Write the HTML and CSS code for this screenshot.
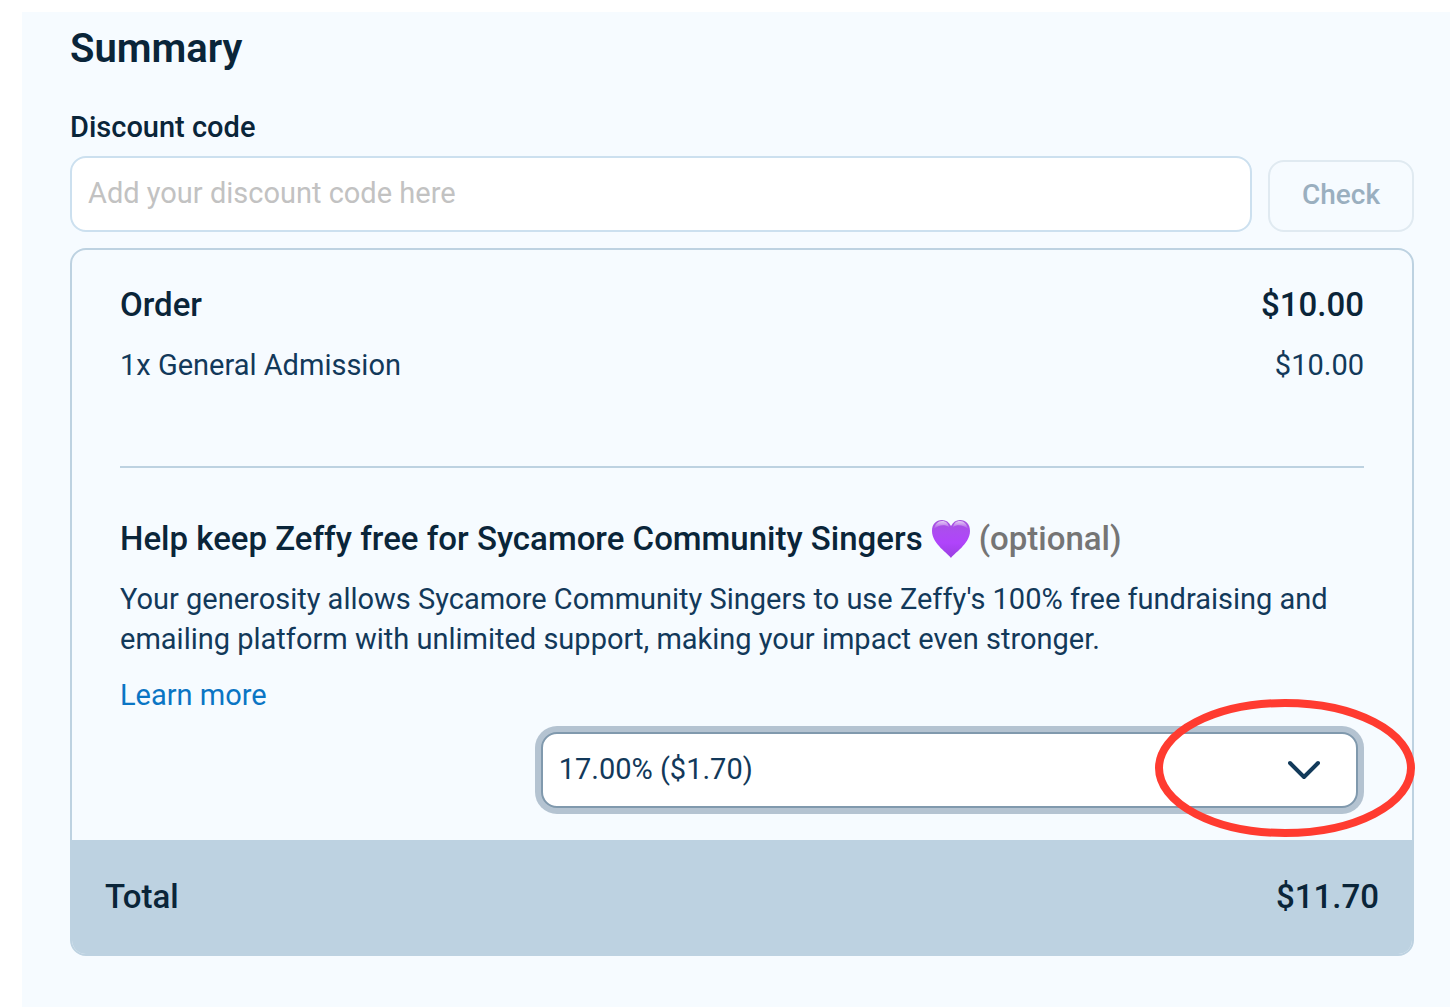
FILE: index.html
```html
<!DOCTYPE html>
<html lang="en">
<head>
<meta charset="utf-8">
<meta name="viewport" content="width=device-width, initial-scale=1">
<title>Summary</title>
<link rel="stylesheet" href="styles.css">
</head>
<body>
<main class="panel">
  <h1 class="title">Summary</h1>

  <form class="discount">
    <label class="discount-label" for="discount-code">Discount code</label>
    <div class="discount-row">
      <input class="discount-input" id="discount-code" type="text" placeholder="Add your discount code here">
      <button class="check-button" type="button" disabled>Check</button>
    </div>
  </form>

  <section class="card">
    <div class="card-body">
      <div class="line line-strong">
        <h2 class="heading">Order</h2>
        <span>$10.00</span>
      </div>
      <div class="line line-item">
        <span>1x General Admission</span>
        <span>$10.00</span>
      </div>
      <hr class="divider">
      <h2 class="heading tip-heading">
        <label for="tip">Help keep Zeffy free for Sycamore Community Singers</label>
        <svg class="heart" viewBox="0 0 40 40" role="img" aria-label="purple heart">
          <defs>
            <linearGradient id="heart-fill" x1="0" y1="0" x2="0" y2="1">
              <stop offset="0" stop-color="#a553dc"/>
              <stop offset="0.3" stop-color="#ac4cf0"/>
              <stop offset="0.6" stop-color="#b044fb"/>
              <stop offset="1" stop-color="#9a3fe0"/>
            </linearGradient>
            <linearGradient id="heart-shine" x1="0" y1="0" x2="0" y2="1">
              <stop offset="0" stop-color="#fff" stop-opacity="0.7"/>
              <stop offset="1" stop-color="#fff" stop-opacity="0"/>
            </linearGradient>
          </defs>
          <path fill="url(#heart-fill)" d="M20 39C18 35 1 25 1 12C1 5 5 1 11 1C15 1 18 3 20 7C22 3 25 1 29 1C35 1 39 5 39 12C39 25 22 35 20 39Z"/>
          <path fill="url(#heart-shine)" d="M3 10C4 5 7 2 11 2C15 2 17 4 18 8C14 5 7 6 3 10Z"/>
          <path fill="url(#heart-shine)" d="M37 10C36 5 33 2 29 2C25 2 23 4 22 8C26 5 33 6 37 10Z"/>
        </svg>
        <span class="optional">(optional)</span>
      </h2>
      <p class="tip-text">Your generosity allows Sycamore Community Singers to use Zeffy's 100% free fundraising and emailing platform with unlimited support, making your impact even stronger.</p>
      <a class="learn-more" href="#">Learn more</a>
      <div class="tip-field">
        <select class="tip-select" id="tip">
          <option>17.00% ($1.70)</option>
        </select>
        <svg class="chevron" viewBox="0 0 32 20" aria-hidden="true">
          <path d="M2 3L16 17L30 3" fill="none" stroke="#123a5a" stroke-width="4" stroke-linecap="round" stroke-linejoin="round"/>
        </svg>
        <svg class="highlight" viewBox="0 0 260 140" aria-hidden="true">
          <ellipse cx="130" cy="70" rx="126" ry="65" fill="none" stroke="#ff3b30" stroke-width="8"/>
        </svg>
      </div>
    </div>
    <div class="line line-strong total">
      <h2 class="heading">Total</h2>
      <span>$11.70</span>
    </div>
  </section>
</main>
</body>
</html>
```
FILE: styles.css
```css
* {
  box-sizing: border-box;
}

body {
  margin: 0;
  padding: 12px 0 0 22px;
  min-height: 100vh;
  display: flex;
  background: #fff;
  color: #12395a;
  font: 29px/40px Roboto, sans-serif;
}

.panel {
  flex: 1;
  padding: 13px 36px 48px 48px;
  background: #f6fbff;
}

.title {
  margin: 0 0 32px;
  color: #0a2539;
  font-size: 40px;
  line-height: 48px;
  font-weight: 600;
}

.discount {
  margin-bottom: 16px;
}

.discount-label {
  display: block;
  margin-bottom: 7px;
  color: #0a2539;
  line-height: 44px;
  font-weight: 500;
}

.discount-row {
  display: flex;
  align-items: flex-end;
  gap: 16px;
}

.discount-input {
  flex: 1;
  min-width: 0;
  height: 76px;
  padding: 0 16px 2px;
  border: 2px solid #cce0ef;
  border-radius: 16px;
  background: #fff;
  color: inherit;
  font: inherit;
}

.discount-input::placeholder {
  color: #c2c2c2;
}

.check-button {
  height: 72px;
  padding: 0 32px 2px;
  border: 2px solid #e0eaf1;
  border-radius: 16px;
  background: transparent;
  color: #9aafbf;
  font: inherit;
  font-size: 28px;
  font-weight: 500;
}

.card {
  border: 2px solid #bdd2e1;
  border-radius: 16px;
}

.card-body {
  padding: 31px 48px 26px;
}

.line {
  display: flex;
  justify-content: space-between;
}

.line-strong {
  color: #0a2539;
  font-size: 33px;
  line-height: 48px;
  font-weight: 500;
}

.line-item {
  margin-top: 16px;
}

.heading {
  margin: 0;
  color: #0a2539;
  font-size: 33px;
  line-height: 48px;
  font-weight: 500;
}

.divider {
  margin: 81px 0 47px;
  border: 0;
  border-top: 2px solid #bdd2e1;
}

.tip-heading {
  display: flex;
  align-items: center;
  gap: 8px;
}

.heart {
  width: 40px;
  height: 40px;
}

.optional {
  color: #757575;
}

.tip-text {
  margin: 16px 0;
}

.learn-more {
  display: block;
  color: #0a75c4;
  text-decoration: none;
}

.tip-field {
  position: relative;
  width: calc(200% / 3);
  margin: 11px 0 0 auto;
  padding: 6px;
}

.tip-select {
  display: block;
  width: 100%;
  height: 76px;
  padding: 0 16px 2px;
  appearance: none;
  border: 2px solid #8099ad;
  border-radius: 16px;
  outline: 0;
  box-shadow: 0 0 0 6px #b4c3d1;
  background: #fff;
  color: inherit;
  font: inherit;
}

.chevron {
  position: absolute;
  top: 34px;
  right: 44px;
  width: 32px;
  height: 20px;
  pointer-events: none;
}

.highlight {
  position: absolute;
  top: -28px;
  right: -51px;
  width: 260px;
  height: 140px;
  pointer-events: none;
}

.total {
  padding: 33px;
  border-radius: 0 0 14px 14px;
  background: #bdd2e1;
}
```
